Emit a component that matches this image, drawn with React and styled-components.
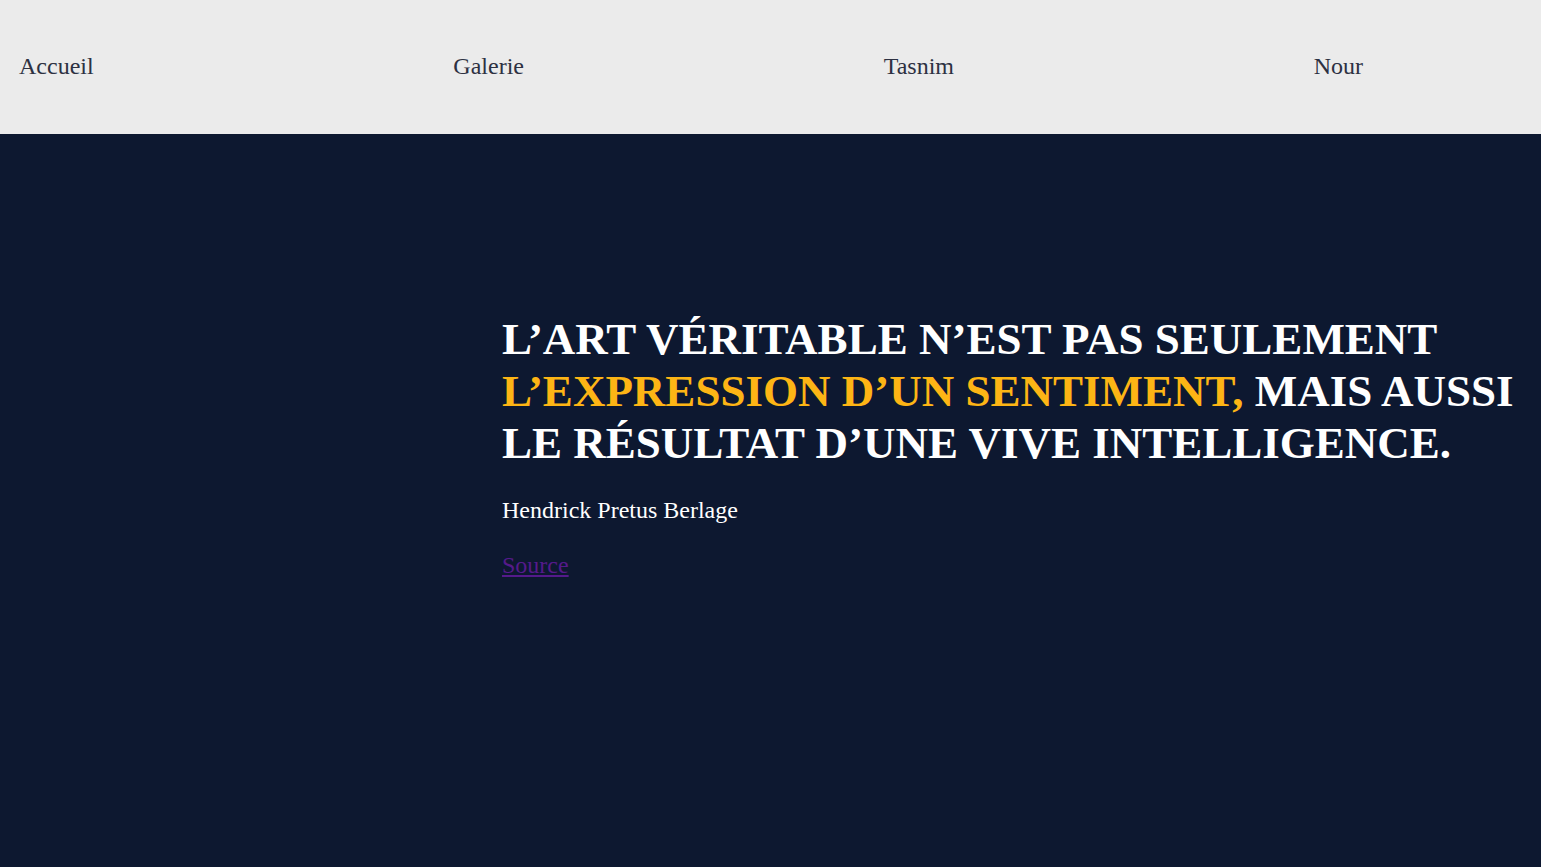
import React from "react";
import styled, { createGlobalStyle } from "styled-components";

const Global = createGlobalStyle`
  html, body { margin: 0; padding: 0; }
  body { font-family: "Liberation Serif", "Times New Roman", serif; background: #0d1830; }
`;

const Nav = styled.nav`
  height: 134px;
  background: #ebebeb;
  display: flex;
  align-items: center;
  padding-bottom: 2px;
  box-sizing: border-box;
`;

const NavList = styled.ul`
  list-style: none;
  margin: 0;
  padding: 0 178px 0 19px;
  width: 100%;
  box-sizing: border-box;
  display: flex;
  justify-content: space-between;
`;

const NavLink = styled.a`
  font-size: 24px;
  color: #2d3142;
  text-decoration: none;
`;

const Hero = styled.section`
  min-height: 733px;
  background: #0d1830;
  box-sizing: border-box;
  padding: 179px 20px 0 502px;
`;

const Quote = styled.h1`
  margin: 0;
  font-size: 45px;
  line-height: 52px;
  font-weight: 700;
  color: #ffffff;
  text-transform: uppercase;
`;

const Highlight = styled.span`
  color: #fdb515;
`;

const Author = styled.p`
  margin: 28px 0 0;
  font-size: 24px;
  color: #ffffff;
`;

const SourceLink = styled.a`
  display: inline-block;
  margin-top: 28px;
  font-size: 24px;
  color: #551a8b;
  text-decoration: underline;
`;

export default function App() {
  const links = ["Accueil", "Galerie", "Tasnim", "Nour"];
  return (
    <>
      <Global />
      <Nav>
        <NavList>
          {links.map((l) => (
            <li key={l}>
              <NavLink href="#">{l}</NavLink>
            </li>
          ))}
        </NavList>
      </Nav>
      <Hero>
        <Quote>
          L’art véritable n’est pas seulement{" "}
          <Highlight>l’expression d’un sentiment,</Highlight> mais aussi le
          résultat d’une vive intelligence.
        </Quote>
        <Author>Hendrick Pretus Berlage</Author>
        <SourceLink href="#">Source</SourceLink>
      </Hero>
    </>
  );
}
